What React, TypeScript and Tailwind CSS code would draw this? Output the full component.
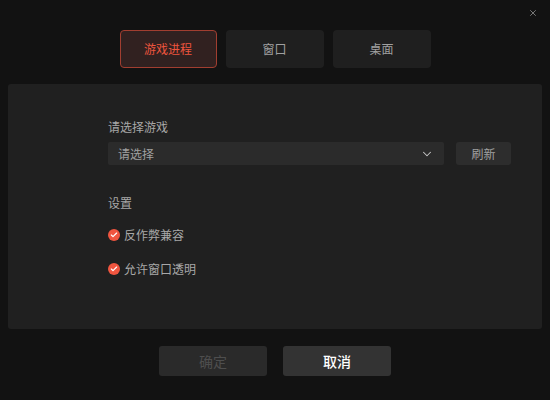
import { ChevronDown, X, Check } from "lucide-react";

const tabs = ["游戏进程", "窗口", "桌面"];

const Option = ({ label }: { label: string }) => (
  <div className="flex h-[18px] items-center gap-[4px]">
    <span className="flex h-[12px] w-[12px] items-center justify-center rounded-full bg-[#f0553f]">
      <Check className="h-[8px] w-[8px] text-white" strokeWidth={3.5} />
    </span>
    <span className="text-[12px] text-[#a8a8a8]">{label}</span>
  </div>
);

export default function App() {
  return (
    <div
      className="relative flex h-[400px] w-[550px] flex-col bg-[#121212]"
      style={{ fontFamily: '"Noto Sans CJK SC", "Noto Sans", sans-serif' }}
    >
      <button className="absolute right-[12px] top-[8px] text-[#8a8a8a]">
        <X className="h-[10px] w-[10px]" strokeWidth={2} />
      </button>

      <div className="flex justify-center gap-[9px] pt-[30px]">
        {tabs.map((t, i) => (
          <div
            key={t}
            className={
              i === 0
                ? "flex h-[38px] w-[97px] items-center justify-center rounded-[4px] border border-[#a13e30] bg-[#312120] text-[12px] text-[#ee553e]"
                : "flex h-[38px] w-[98px] items-center justify-center rounded-[4px] bg-[#1f1f1f] text-[12px] text-[#a0a0a0]"
            }
          >
            {t}
          </div>
        ))}
      </div>

      <div className="mx-[8px] mt-[16px] h-[245px] rounded-[3px] bg-[#202020] pl-[100px] pr-[31px] pt-[34px]">
        <div className="text-[12px] leading-[18px] text-[#a8a8a8]">请选择游戏</div>
        <div className="mt-[6px] flex gap-[12px]">
          <div className="flex h-[23px] w-[336px] items-center justify-between rounded-[2px] bg-[#2b2b2b] pl-[10px] pr-[10px]">
            <span className="text-[12px] text-[#a0a0a0]">请选择</span>
            <ChevronDown className="h-[14px] w-[14px] text-[#c8c8c8]" strokeWidth={1.8} />
          </div>
          <button className="h-[23px] w-[55px] rounded-[3px] bg-[#2d2d2d] text-[12px] text-[#a0a0a0]">
            刷新
          </button>
        </div>

        <div className="mt-[29px] text-[12px] leading-[18px] text-[#a8a8a8]">设置</div>
        <div className="mt-[14px] flex flex-col gap-[16px]">
          <Option label="反作弊兼容" />
          <Option label="允许窗口透明" />
        </div>
      </div>

      <div className="mt-[17px] flex justify-center gap-[16px]">
        <button className="h-[30px] w-[108px] rounded-[3px] bg-[#2a2a2a] text-[14px] text-[#4e4e4e]">
          确定
        </button>
        <button className="h-[30px] w-[108px] rounded-[3px] bg-[#333333] text-[14px] font-medium text-white">
          取消
        </button>
      </div>
    </div>
  );
}
